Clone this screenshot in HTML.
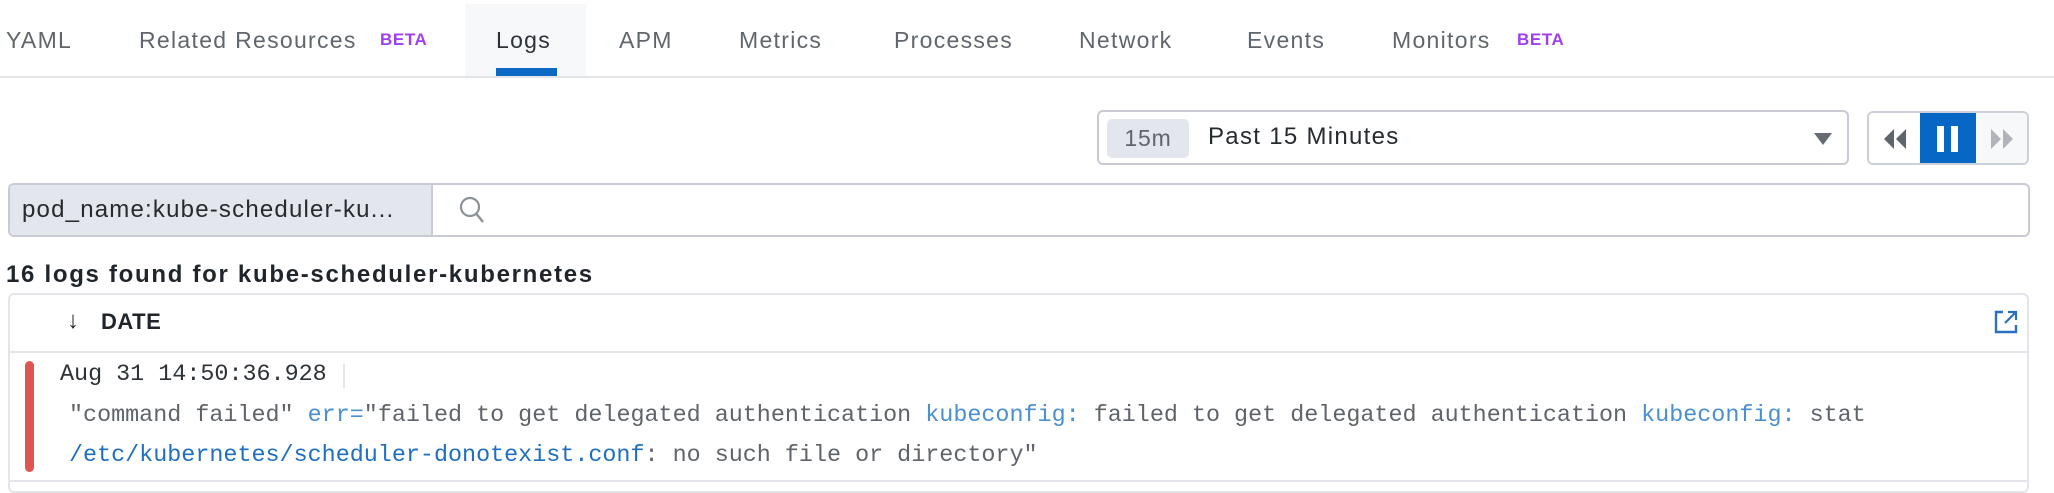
<!DOCTYPE html>
<html><head><meta charset="utf-8"><style>
*{box-sizing:border-box;margin:0;padding:0}
body{width:2054px;height:488px;background:#fff;position:relative;overflow:hidden;font-family:"Liberation Sans",sans-serif;color:#2c3238}
.a{position:absolute;white-space:nowrap}
.tab{font-size:23px;color:#60666d;top:27px;letter-spacing:1.3px}
.beta{font-size:17px;font-weight:bold;color:#a03ff0;top:30px;letter-spacing:0.6px}
.mono{font-family:"Liberation Mono",monospace;font-size:23.4px;color:#5f646b}
.k{color:#4a8fd1}.p{color:#1f6fc1}
</style></head><body>
<div class="a" style="left:465px;top:4px;width:121px;height:72px;background:#f7f8fa"></div>
<div class="a tab" style="left:6px">YAML</div>
<div class="a tab" style="left:139px">Related Resources</div>
<div class="a beta" style="left:380px">BETA</div>
<div class="a tab" style="left:496px;color:#2c3238">Logs</div>
<div class="a tab" style="left:619px">APM</div>
<div class="a tab" style="left:739px">Metrics</div>
<div class="a tab" style="left:894px">Processes</div>
<div class="a tab" style="left:1079px">Network</div>
<div class="a tab" style="left:1247px">Events</div>
<div class="a tab" style="left:1392px">Monitors</div>
<div class="a beta" style="left:1517px">BETA</div>
<div class="a" style="left:496px;top:68px;width:61px;height:8px;background:#0b69c3"></div>
<div class="a" style="left:0;top:76px;width:2054px;height:2px;background:#e3e5ea"></div>

<div class="a" style="left:1097px;top:110px;width:752px;height:55px;border:2px solid #c8cbd3;border-radius:6px"></div>
<div class="a" style="left:1107px;top:119px;width:82px;height:39px;background:#e3e6ed;border-radius:5px;font-size:23px;color:#5f656c;text-align:center;line-height:39px;letter-spacing:0.8px">15m</div>
<div class="a" style="left:1208px;top:123px;font-size:24px;color:#262b30;letter-spacing:1.3px">Past 15 Minutes</div>
<svg class="a" style="left:1813px;top:132px" width="20" height="14"><path d="M1 1h18L10 13z" fill="#676c73"/></svg>
<div class="a" style="left:1867px;top:111px;width:162px;height:54px;border:2px solid #ccd0d8;border-radius:6px;background:#f7f8fa;overflow:hidden">
 <div class="a" style="left:0;top:0;width:51px;height:54px;background:#fff"></div>
 <svg class="a" style="left:12px;top:15px" width="26" height="22"><path d="M13 1L3 11l10 10zM25 1L15 11l10 10z" fill="#5f656c"/></svg>
 <div class="a" style="left:51px;top:-2px;width:56px;height:56px;background:#0767c4"></div>
 <div class="a" style="left:68px;top:13px;width:7px;height:26px;background:#fff"></div>
 <div class="a" style="left:82px;top:13px;width:7px;height:26px;background:#fff"></div>
 <svg class="a" style="left:121px;top:15px" width="26" height="22"><path d="M1 1l10 10L1 21zM13 1l10 10-10 10z" fill="#b0b4ba"/></svg>
</div>

<div class="a" style="left:8px;top:183px;width:2022px;height:54px;border:2px solid #c8cbd3;border-radius:6px;overflow:hidden">
 <div class="a" style="left:0;top:0;width:423px;height:50px;background:#e3e6ed;border-right:2px solid #c8cbd3"></div>
 <div class="a" style="left:12px;top:11px;font-size:24px;color:#262b30;letter-spacing:1.2px">pod_name:kube-scheduler-ku...</div>
 <svg class="a" style="left:448px;top:10px" width="28" height="30"><circle cx="12" cy="12" r="9" fill="none" stroke="#8c9198" stroke-width="2.2"/><path d="M18.5 19l6.5 8" stroke="#8c9198" stroke-width="2.4"/></svg>
</div>

<div class="a" style="left:6px;top:261px;font-size:24px;font-weight:bold;color:#1f252b;letter-spacing:1.7px">16 logs found for kube-scheduler-kubernetes</div>
<div class="a" style="left:8px;top:293px;width:2021px;height:200px;border:2px solid #e3e5ea;border-radius:6px"></div>
<div class="a" style="left:8px;top:351px;width:2021px;height:2px;background:#e3e5ea"></div>
<div class="a" style="left:8px;top:480px;width:2021px;height:2px;background:#e3e5ea"></div>
<div class="a" style="left:67px;top:307px;font-size:24px;font-weight:bold;color:#1f252b">↓</div>
<div class="a" style="left:101px;top:309px;font-size:22px;font-weight:bold;color:#1f252b;letter-spacing:0.5px">DATE</div>
<svg class="a" style="left:1994px;top:310px" width="24" height="24"><path d="M9 2H2v20h20v-7" fill="none" stroke="#2a72c0" stroke-width="2.4"/><path d="M11 13L21 3M14 2h8v8" fill="none" stroke="#2a72c0" stroke-width="2.2"/></svg>
<div class="a" style="left:25px;top:361px;width:9px;height:111px;background:#e05552;border-radius:5px"></div>
<div class="a mono" style="left:60px;top:362px;color:#2c3238">Aug 31 14:50:36.928</div>
<div class="a" style="left:343px;top:364px;width:2px;height:24px;background:#e3e5ea"></div>
<div class="a mono" style="left:69px;top:403px">"command failed" <span class="k">err=</span>"failed to get delegated authentication <span class="k">kubeconfig:</span> failed to get delegated authentication <span class="k">kubeconfig:</span> stat</div>
<div class="a mono" style="left:69px;top:443px"><span class="p">/etc/kubernetes/scheduler-donotexist.conf</span>: no such file or directory"</div>
</body></html>
